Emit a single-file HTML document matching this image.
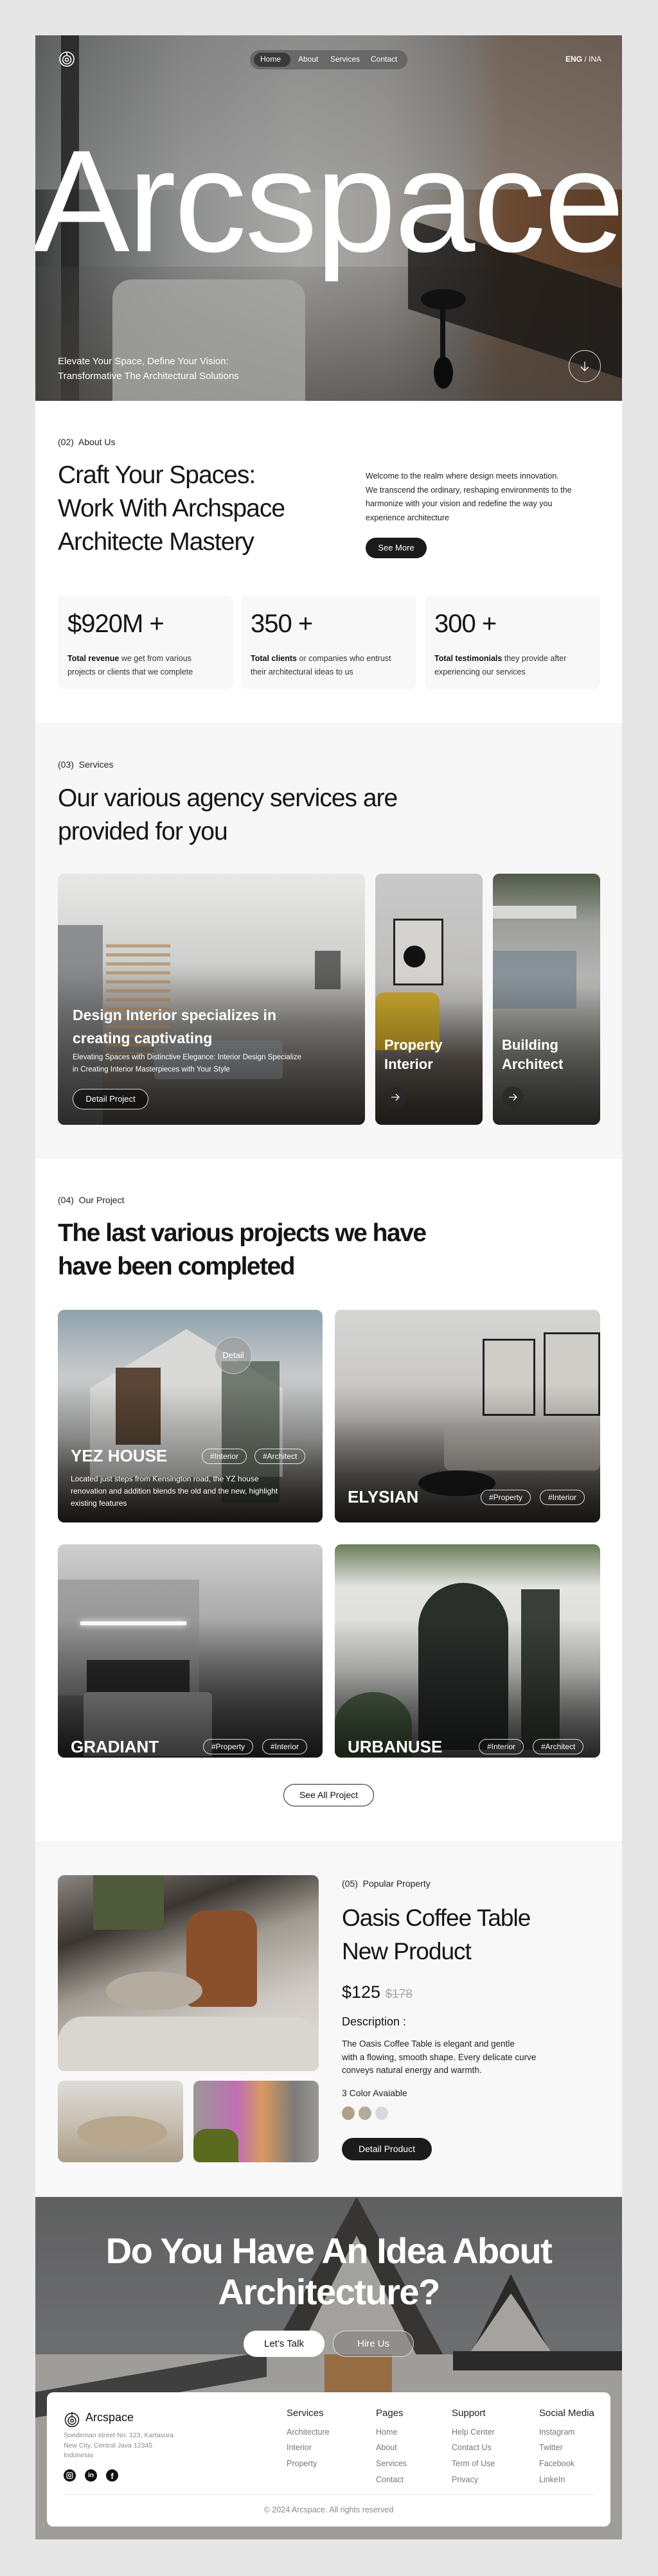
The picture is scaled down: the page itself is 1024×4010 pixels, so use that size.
<!DOCTYPE html>
<html><head><meta charset="utf-8">
<style>
*{margin:0;padding:0;box-sizing:border-box}
body{width:1024px;height:4010px;background:#e6e6e6;font-family:"Liberation Sans",Arial,sans-serif;color:#141414;position:relative;overflow:hidden}
.a{position:absolute}
.sec{position:absolute;left:55px;width:913px}
.lbl{font-size:14px;color:#222;white-space:nowrap}
.h2{font-size:39px;line-height:52px;letter-spacing:-1px;font-weight:500;color:#151515;white-space:nowrap}
.card{position:absolute;border-radius:10px;overflow:hidden}
.ov{position:absolute;inset:0;background:linear-gradient(180deg,rgba(0,0,0,0) 35%,rgba(0,0,0,.65) 100%)}
.tag{position:absolute;height:24px;border:1px solid rgba(255,255,255,.85);border-radius:12px;color:#fff;font-size:12px;line-height:22px;padding:0 12px;white-space:nowrap}
.ptitle{position:absolute;color:#fff;font-weight:700;font-size:26px;white-space:nowrap}
.fh{position:absolute;font-size:15px;color:#222}
.fi{position:absolute;font-size:12.5px;color:#777}
</style></head><body>

<!-- HERO -->
<div class="sec" style="top:55px;height:569px;overflow:hidden;background:linear-gradient(90deg,#3a3c3c 0%,#5e6060 8%,#8d8f8e 25%,#a9a9a7 45%,#9e9c99 60%,#7b736c 72%,#6a4a33 80%,#5a3b26 100%)">
  <div class="a" style="left:0;top:0;width:913px;height:240px;background:linear-gradient(180deg,#777 0%,#999 100%);opacity:.55"></div>
  <div class="a" style="left:40px;top:0;width:28px;height:569px;background:#1e1e1e;opacity:.8"></div>
  <div class="a" style="left:0;top:360px;width:913px;height:209px;background:linear-gradient(180deg,rgba(80,78,76,.2),rgba(70,68,66,.7))"></div>
  <div class="a" style="left:120px;top:380px;width:300px;height:190px;background:#a8a8a6;border-radius:30px 30px 0 0;opacity:.8"></div>
  <div class="a" style="left:580px;top:340px;width:333px;height:140px;background:#141414;opacity:.75;transform:skewY(18deg)"></div>
  <div class="a" style="left:600px;top:395px;width:70px;height:32px;border-radius:50%;background:#111"></div>
  <div class="a" style="left:630px;top:420px;width:8px;height:110px;background:#111"></div>
  <div class="a" style="left:620px;top:500px;width:30px;height:50px;border-radius:50%;background:#0c0c0c"></div>
  <svg class="a" style="left:36px;top:22px" width="26" height="28" viewBox="0 0 26 28" fill="none" stroke="#fff" stroke-width="1.6"><circle cx="13" cy="15" r="11"/><circle cx="13" cy="16" r="6.5"/><circle cx="13" cy="16" r="2.5"/><path d="M13 4 V10"/></svg>
  <div class="a" style="left:334px;top:23px;width:245px;height:30px;border-radius:15px;background:rgba(95,95,95,.8)"></div>
  <div class="a" style="left:340px;top:27px;width:57px;height:22px;border-radius:11px;background:#3a3a3a"></div>
  <div class="a" style="left:350px;top:30px;color:#fff;font-size:12px">Home</div>
  <div class="a" style="left:409px;top:30px;color:#fff;font-size:12px">About</div>
  <div class="a" style="left:459px;top:30px;color:#fff;font-size:12px">Services</div>
  <div class="a" style="left:522px;top:30px;color:#fff;font-size:12px">Contact</div>
  <div class="a" style="left:825px;top:30px;color:#fff;font-size:12px"><b>ENG</b> / INA</div>
  <div class="a" style="left:-4px;top:128px;color:#fff;font-size:226px;line-height:260px;letter-spacing:-3px;white-space:nowrap">Arcspace</div>
  <div class="a" style="left:35px;top:496px;color:#fff;font-size:15px;line-height:23px;white-space:nowrap">Elevate Your Space, Define Your Vision:<br>Transformative The Architectural Solutions</div>
  <div class="a" style="left:830px;top:490px;width:50px;height:50px;border-radius:50%;border:1.5px solid rgba(255,255,255,.85)"></div>
  <svg class="a" style="left:846px;top:506px" width="18" height="18" viewBox="0 0 18 18" fill="none" stroke="#fff" stroke-width="1.3"><path d="M9 2V16M3 10l6 6 6-6"/></svg>
</div>

<!-- ABOUT -->
<div class="sec" style="top:624px;height:501px;background:#fff">
  <div class="a lbl" style="left:35px;top:56px">(02)&nbsp; About Us</div>
  <div class="a h2" style="left:35px;top:90px">Craft Your Spaces:<br>Work With Archspace<br>Architecte Mastery</div>
  <div class="a" style="left:514px;top:107px;font-size:12.5px;line-height:21.5px;color:#222;width:380px">Welcome to the realm where design meets innovation.<br>We transcend the ordinary, reshaping environments to the<br>harmonize with your vision and redefine the way you<br>experience architecture</div>
  <div class="a" style="left:514px;top:213px;width:95px;height:32px;border-radius:16px;background:#1b1b1b;color:#fff;font-size:13px;line-height:32px;text-align:center">See More</div>
  <div class="a" style="left:35px;top:302px;width:273px;height:147px;border-radius:10px;background:#f8f8f8"></div>
  <div class="a" style="left:321px;top:302px;width:272px;height:147px;border-radius:10px;background:#f8f8f8"></div>
  <div class="a" style="left:606px;top:302px;width:273px;height:147px;border-radius:10px;background:#f8f8f8"></div>
  <div class="a" style="left:50px;top:325px;font-size:40px;letter-spacing:-1px">$920M +</div>
  <div class="a" style="left:335px;top:325px;font-size:40px;letter-spacing:-1px">350 +</div>
  <div class="a" style="left:621px;top:325px;font-size:40px;letter-spacing:-1px">300 +</div>
  <div class="a" style="left:50px;top:391px;font-size:12.5px;line-height:21px;color:#333"><b style="color:#111">Total revenue</b> we get from various<br>projects or clients that we complete</div>
  <div class="a" style="left:335px;top:391px;font-size:12.5px;line-height:21px;color:#333"><b style="color:#111">Total clients</b> or companies who entrust<br>their architectural ideas to us</div>
  <div class="a" style="left:621px;top:391px;font-size:12.5px;line-height:21px;color:#333"><b style="color:#111">Total testimonials</b> they provide after<br>experiencing our services</div>
</div>

<!-- SERVICES -->
<div class="sec" style="top:1125px;height:679px;background:#f7f7f7">
  <div class="a lbl" style="left:35px;top:57px">(03)&nbsp; Services</div>
  <div class="a h2" style="left:35px;top:92px">Our various agency services are<br>provided for you</div>
  <div class="card" style="left:35px;top:235px;width:478px;height:391px;background:linear-gradient(180deg,#e8e8e6 0%,#cfcfcd 35%,#8a8884 60%,#4a4540 100%)">
    <div class="a" style="left:0;top:80px;width:70px;height:311px;background:#6d6f72;opacity:.7"></div>
    <div class="a" style="left:75px;top:110px;width:100px;height:170px;background:repeating-linear-gradient(180deg,#b08a5c 0 5px,transparent 5px 14px);opacity:.7"></div>
    <div class="a" style="left:400px;top:120px;width:40px;height:60px;background:#333;opacity:.7"></div>
    <div class="a" style="left:150px;top:260px;width:200px;height:60px;background:#8f939a;border-radius:6px;opacity:.7"></div>
    <div class="a" style="left:0;top:0;right:0;bottom:0;background:linear-gradient(180deg,rgba(0,0,0,0) 40%,rgba(0,0,0,.55) 100%)"></div>
    <div class="a" style="left:23px;top:202px;color:#fff;font-weight:700;font-size:23px;line-height:36px;white-space:nowrap">Design Interior specializes in<br>creating captivating</div>
    <div class="a" style="left:23px;top:277px;color:#fff;font-size:11.5px;line-height:19px;white-space:nowrap">Elevating Spaces with Distinctive Elegance: Interior Design Specialize<br>in Creating Interior Masterpieces with Your Style</div>
    <div class="a" style="left:23px;top:335px;width:118px;height:32px;border-radius:16px;border:1.3px solid rgba(255,255,255,.85);background:rgba(0,0,0,.55);color:#fff;font-size:13px;line-height:30px;text-align:center">Detail Project</div>
  </div>
  <div class="card" style="left:529px;top:235px;width:167px;height:391px;background:linear-gradient(180deg,#c9c9c9 0%,#bdbcba 50%,#5e5650 75%,#3e3731 100%)">
    <div class="a" style="left:28px;top:70px;width:78px;height:104px;border:3px solid #222;background:#d5d3cf"></div>
    <div class="a" style="left:44px;top:112px;width:34px;height:34px;border-radius:50%;background:#111"></div>
    <div class="a" style="left:0;top:185px;width:100px;height:90px;background:#c9a31e;border-radius:14px 14px 4px 4px;opacity:.9"></div>
    <div class="a" style="left:0;top:0;right:0;bottom:0;background:linear-gradient(180deg,rgba(0,0,0,0) 40%,rgba(0,0,0,.55) 100%)"></div>
    <div class="a" style="left:14px;top:252px;color:#fff;font-weight:700;font-size:22px;line-height:30px">Property<br>Interior</div>
    <div class="a" style="left:14px;top:331px;width:34px;height:34px;border-radius:50%;background:rgba(40,40,40,.7)"></div>
    <svg class="a" style="left:23px;top:340px" width="16" height="16" viewBox="0 0 16 16" fill="none" stroke="#fff" stroke-width="1.3"><path d="M2 8H14M9 3l5 5-5 5"/></svg>
  </div>
  <div class="card" style="left:712px;top:235px;width:167px;height:391px;background:linear-gradient(180deg,#4f5a45 0%,#9d9f9c 20%,#b8b8b5 45%,#7c7d78 70%,#4b4c48 100%)">
    <div class="a" style="left:0;top:50px;width:130px;height:20px;background:#d8d8d6"></div>
    <div class="a" style="left:0;top:120px;width:130px;height:90px;background:#7d8a94;opacity:.8"></div>
    <div class="a" style="left:0;top:0;right:0;bottom:0;background:linear-gradient(180deg,rgba(0,0,0,0) 40%,rgba(0,0,0,.55) 100%)"></div>
    <div class="a" style="left:14px;top:252px;color:#fff;font-weight:700;font-size:22px;line-height:30px">Building<br>Architect</div>
    <div class="a" style="left:14px;top:331px;width:34px;height:34px;border-radius:50%;background:rgba(40,40,40,.7)"></div>
    <svg class="a" style="left:23px;top:340px" width="16" height="16" viewBox="0 0 16 16" fill="none" stroke="#fff" stroke-width="1.3"><path d="M2 8H14M9 3l5 5-5 5"/></svg>
  </div>
</div>

<!-- PROJECTS -->
<div class="sec" style="top:1804px;height:1062px;background:#fff">
  <div class="a lbl" style="left:35px;top:56px">(04)&nbsp; Our Project</div>
  <div class="a h2" style="left:35px;top:90px;font-weight:700;letter-spacing:-1.5px">The last various projects we have<br>have been completed</div>
  <div class="card" style="left:35px;top:235px;width:412px;height:331px;background:linear-gradient(180deg,#8fa3ad 0%,#c7c9ca 30%,#b5b6b5 60%,#3d3732 100%)">
    <div class="a" style="left:50px;top:30px;width:300px;height:230px;background:#d9d9d8;clip-path:polygon(50% 0,100% 40%,100% 100%,0 100%,0 40%)"></div>
    <div class="a" style="left:90px;top:90px;width:70px;height:120px;background:#5a4636"></div>
    <div class="a" style="left:255px;top:80px;width:90px;height:220px;background:#2d3a2a;opacity:.6"></div>
    <div class="ov"></div>
    <div class="a" style="left:244px;top:42px;width:58px;height:58px;border-radius:50%;background:rgba(150,150,150,.6);border:1px solid rgba(255,255,255,.5);color:#fff;font-size:13px;line-height:56px;text-align:center">Detail</div>
    <div class="ptitle" style="left:20px;top:212px">YEZ HOUSE</div>
    <div class="tag" style="left:224px;top:216px">#Interior</div>
    <div class="tag" style="left:306px;top:216px">#Architect</div>
    <div class="a" style="left:20px;top:254px;color:#fff;font-size:12px;line-height:19px;white-space:nowrap">Located just steps from Kensington road, the YZ house<br>renovation and addition blends the old and the new, highlight<br>existing features</div>
  </div>
  <div class="card" style="left:466px;top:235px;width:413px;height:331px;background:linear-gradient(180deg,#d5d5d3 0%,#c4c3c0 50%,#6e6a66 80%,#3b3835 100%)">
    <div class="a" style="left:230px;top:45px;width:82px;height:120px;border:3px solid #222;background:#cfcdc8"></div>
    <div class="a" style="left:325px;top:35px;width:88px;height:130px;border:3px solid #222;background:#cfcdc8"></div>
    <div class="a" style="left:170px;top:180px;width:243px;height:70px;background:#bab5ae;border-radius:10px"></div>
    <div class="a" style="left:130px;top:250px;width:120px;height:40px;border-radius:50%;background:#1e1e1e"></div>
    <div class="ov"></div>
    <div class="ptitle" style="left:20px;top:276px">ELYSIAN</div>
    <div class="tag" style="left:227px;top:280px">#Property</div>
    <div class="tag" style="left:319px;top:280px">#Interior</div>
  </div>
  <div class="card" style="left:35px;top:600px;width:412px;height:332px;background:linear-gradient(180deg,#cfcfcf 0%,#aaa 35%,#6c6c6c 65%,#353535 100%)">
    <div class="a" style="left:0;top:55px;width:220px;height:180px;background:#8d8d8d;opacity:.6"></div>
    <div class="a" style="left:35px;top:120px;width:165px;height:6px;background:#fff;box-shadow:0 0 10px #fff"></div>
    <div class="a" style="left:45px;top:180px;width:160px;height:70px;background:#2a2a2a"></div>
    <div class="a" style="left:40px;top:230px;width:200px;height:100px;background:#9b9b9d;border-radius:8px 8px 0 0"></div>
    <div class="ov"></div>
    <div class="ptitle" style="left:20px;top:300px">GRADIANT</div>
    <div class="tag" style="left:226px;top:303px">#Property</div>
    <div class="tag" style="left:318px;top:303px">#Interior</div>
  </div>
  <div class="card" style="left:466px;top:600px;width:413px;height:332px;background:linear-gradient(180deg,#6a7d5a 0%,#e4e4e2 20%,#d6d6d4 60%,#666 100%)">
    <div class="a" style="left:130px;top:60px;width:140px;height:260px;border-radius:70px 70px 0 0;background:#2b2f2c"></div>
    <div class="a" style="left:290px;top:70px;width:60px;height:250px;background:#3a3e3a"></div>
    <div class="a" style="left:0;top:230px;width:120px;height:102px;background:#3d5a34;border-radius:50% 50% 0 0;opacity:.8"></div>
    <div class="ov"></div>
    <div class="ptitle" style="left:20px;top:300px">URBANUSE</div>
    <div class="tag" style="left:224px;top:303px">#Interior</div>
    <div class="tag" style="left:308px;top:303px">#Architect</div>
  </div>
  <div class="a" style="left:386px;top:973px;width:141px;height:35px;border-radius:18px;border:1px solid #222;font-size:14px;line-height:33px;text-align:center;color:#111">See All Project</div>
</div>

<!-- POPULAR -->
<div class="sec" style="top:2866px;height:553px;background:#f8f8f8">
  <div class="card" style="left:35px;top:53px;width:406px;height:305px;background:linear-gradient(160deg,#8c8580 0%,#3a352f 25%,#a09a92 45%,#cfcac3 70%,#e2dfda 100%)">
    <div class="a" style="left:55px;top:0;width:110px;height:85px;background:#4e5a3a"></div>
    <div class="a" style="left:200px;top:55px;width:110px;height:150px;border-radius:30px 30px 10px 10px;background:#8a4f2d"></div>
    <div class="a" style="left:75px;top:150px;width:150px;height:60px;border-radius:50%;background:#b5aca0"></div>
    <div class="a" style="left:0;top:220px;width:406px;height:85px;background:#d9d5cf;border-radius:40px 40px 0 0"></div>
  </div>
  <div class="card" style="left:35px;top:373px;width:195px;height:127px;background:linear-gradient(180deg,#dcdcda 0%,#c9c1b3 50%,#a99d89 100%)">
    <div class="a" style="left:30px;top:55px;width:140px;height:50px;border-radius:50%;background:#b8a78d"></div>
  </div>
  <div class="card" style="left:246px;top:373px;width:195px;height:127px;background:linear-gradient(90deg,#9a9896 0%,#c06fb2 35%,#d89a60 55%,#7d7b78 80%,#9a9896 100%)">
    <div class="a" style="left:0;top:75px;width:70px;height:52px;background:#5a6b1f;border-radius:20px 20px 0 0"></div>
  </div>
  <div class="a lbl" style="left:477px;top:58px">(05)&nbsp; Popular Property</div>
  <div class="a" style="left:477px;top:94px;font-size:37px;line-height:52px;letter-spacing:-1px;color:#151515;white-space:nowrap">Oasis Coffee Table<br>New Product</div>
  <div class="a" style="left:477px;top:220px;font-size:27px;color:#111;white-space:nowrap">$125 <span style="font-size:19px;color:#aaa;text-decoration:line-through">$178</span></div>
  <div class="a" style="left:477px;top:271px;font-size:18px;color:#111">Description :</div>
  <div class="a" style="left:477px;top:306px;font-size:13.5px;line-height:20.5px;color:#222;white-space:nowrap">The Oasis Coffee Table is elegant and gentle<br>with a flowing, smooth shape. Every delicate curve<br>conveys natural energy and warmth.</div>
  <div class="a" style="left:477px;top:384px;font-size:14px;color:#222">3 Color Avaiable</div>
  <div class="a" style="left:477px;top:413px;width:20px;height:21px;border-radius:50%;background:#b0a08a"></div>
  <div class="a" style="left:503px;top:413px;width:20px;height:21px;border-radius:50%;background:#b6aa9c"></div>
  <div class="a" style="left:529px;top:413px;width:20px;height:21px;border-radius:50%;background:#d9d9dc"></div>
  <div class="a" style="left:477px;top:462px;width:140px;height:35px;border-radius:18px;background:#1b1b1b;color:#fff;font-size:14px;line-height:35px;text-align:center">Detail Product</div>
</div>

<!-- CTA -->
<div class="sec" style="top:3420px;height:533px;overflow:hidden;background:linear-gradient(180deg,#777879 0%,#8a8b8e 40%,#8a8785 100%)">
  <div class="a" style="left:330px;top:0;width:340px;height:310px;background:#3e3b39;clip-path:polygon(50% 0,100% 100%,0 100%)"></div>
  <div class="a" style="left:350px;top:60px;width:300px;height:300px;background:#d9d6d0;clip-path:polygon(50% 0,100% 100%,0 100%)"></div>
  <div class="a" style="left:640px;top:120px;width:200px;height:200px;background:#2c2b2a;clip-path:polygon(50% 0,100% 100%,0 100%)"></div>
  <div class="a" style="left:670px;top:150px;width:140px;height:170px;background:#dcd9d3;clip-path:polygon(50% 0,100% 60%,100% 100%,0 100%,0 60%)"></div>
  <div class="a" style="left:0;top:245px;width:913px;height:300px;background:#d3d0cb"></div>
  <div class="a" style="left:0;top:240px;width:360px;height:40px;background:#4a4a4a;transform:skewY(-10deg);transform-origin:right"></div>
  <div class="a" style="left:450px;top:245px;width:105px;height:100px;background:#c68a4e"></div>
  <div class="a" style="left:650px;top:240px;width:263px;height:30px;background:#2a2a2a"></div>
  <div class="a" style="left:0;top:0;width:913px;height:533px;background:rgba(40,40,40,.3)"></div>
  <div class="a" style="left:0;top:52px;width:913px;text-align:center;color:#fff;font-weight:700;font-size:56px;line-height:64px;letter-spacing:-1.5px">Do You Have An Idea About<br>Architecture?</div>
  <div class="a" style="left:324px;top:208px;width:126px;height:41px;border-radius:20px;background:#fff;color:#111;font-size:15px;line-height:41px;text-align:center">Let’s Talk</div>
  <div class="a" style="left:463px;top:208px;width:126px;height:41px;border-radius:20px;border:1px solid rgba(255,255,255,.7);background:rgba(130,130,130,.6);color:#fff;font-size:15px;line-height:39px;text-align:center">Hire Us</div>
  <div class="a" style="left:18px;top:304px;width:877px;height:209px;border-radius:10px;background:#fff">
    <svg class="a" style="left:27px;top:29px" width="24" height="26" viewBox="0 0 24 26" fill="none" stroke="#111" stroke-width="1.5"><circle cx="12" cy="14" r="10.5"/><circle cx="12" cy="15" r="6"/><circle cx="12" cy="15" r="2.2"/><path d="M12 2V9"/></svg>
    <div class="a" style="left:60px;top:29px;font-size:18px;color:#111">Arcspace</div>
    <div class="a" style="left:26px;top:60px;font-size:10.5px;line-height:15.5px;color:#888;white-space:nowrap">Soedirman street No. 123, Kartasura<br>New City, Central Java 12345<br>Indonesia</div>
    <div class="a" style="left:26px;top:120px;width:19px;height:19px;border-radius:50%;background:#111"></div>
    <div class="a" style="left:59px;top:120px;width:19px;height:19px;border-radius:50%;background:#111;color:#fff;font-size:10px;font-weight:700;line-height:19px;text-align:center">in</div>
    <div class="a" style="left:92px;top:120px;width:19px;height:19px;border-radius:50%;background:#111;color:#fff;font-size:13px;font-weight:700;line-height:21px;text-align:center">f</div>
    <svg class="a" style="left:30px;top:124px" width="11" height="11" viewBox="0 0 11 11" fill="none" stroke="#fff" stroke-width="1.2"><rect x="1" y="1" width="9" height="9" rx="2"/><circle cx="5.5" cy="5.5" r="2"/></svg>
    <div class="fh" style="left:373px;top:24px">Services</div>
    <div class="fi" style="left:373px;top:55px">Architecture</div>
    <div class="fi" style="left:373px;top:79px">Interior</div>
    <div class="fi" style="left:373px;top:104px">Property</div>
    <div class="fh" style="left:512px;top:24px">Pages</div>
    <div class="fi" style="left:512px;top:55px">Home</div>
    <div class="fi" style="left:512px;top:79px">About</div>
    <div class="fi" style="left:512px;top:104px">Services</div>
    <div class="fi" style="left:512px;top:129px">Contact</div>
    <div class="fh" style="left:630px;top:24px">Support</div>
    <div class="fi" style="left:630px;top:55px">Help Center</div>
    <div class="fi" style="left:630px;top:79px">Contact Us</div>
    <div class="fi" style="left:630px;top:104px">Term of Use</div>
    <div class="fi" style="left:630px;top:129px">Privacy</div>
    <div class="fh" style="left:766px;top:24px">Social Media</div>
    <div class="fi" style="left:766px;top:55px">Instagram</div>
    <div class="fi" style="left:766px;top:79px">Twitter</div>
    <div class="fi" style="left:766px;top:104px">Facebook</div>
    <div class="fi" style="left:766px;top:129px">LinkeIn</div>
    <div class="a" style="left:26px;top:159px;width:825px;height:1px;background:#e6e6e6"></div>
    <div class="a" style="left:0;top:176px;width:877px;text-align:center;font-size:12.5px;color:#888">© 2024 Arcspace. All rights reserved</div>
  </div>
</div>
</body></html>
